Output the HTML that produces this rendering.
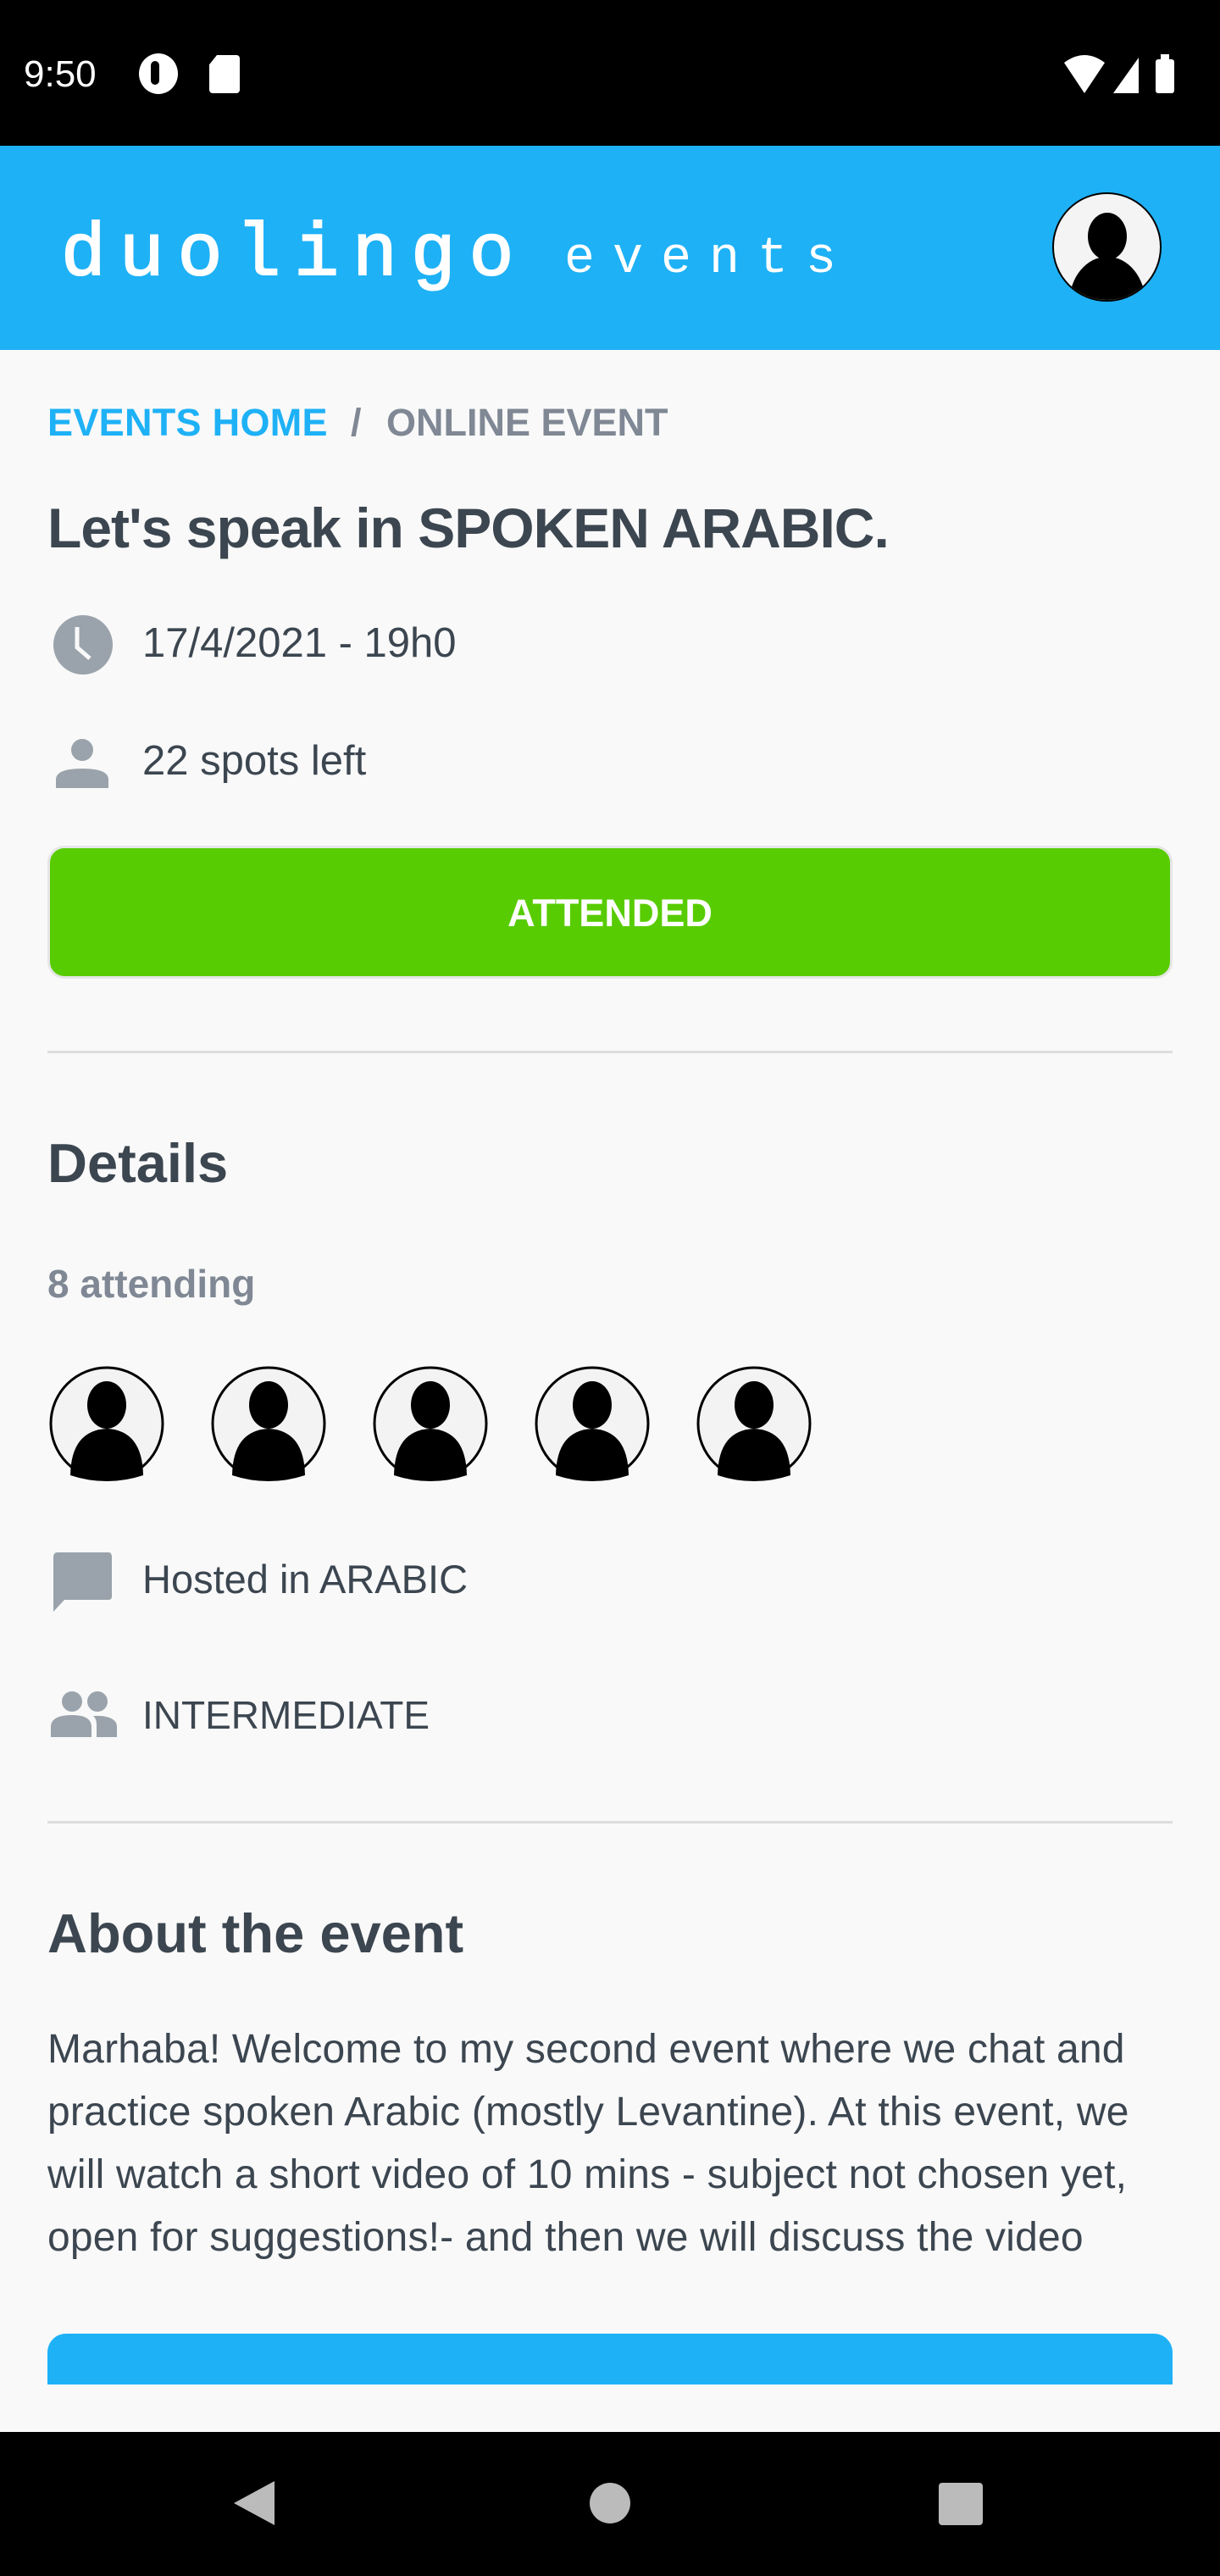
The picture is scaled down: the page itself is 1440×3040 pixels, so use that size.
<!DOCTYPE html>
<html><head><meta charset="utf-8"><style>
*{margin:0;padding:0;box-sizing:border-box}
body{width:1440px;height:3040px;background:#f9f9f9;font-family:"Liberation Sans",sans-serif;color:#3c4650;position:relative;overflow:hidden}
.a{position:absolute;white-space:nowrap}
.t{line-height:1}
</style></head><body>
<div class="a" style="left:0;top:0;width:1440px;height:172px;background:#000"></div>
<div class="a t" style="left:28px;top:66px;color:#fff;font-size:44px">9:50</div>
<div class="a" style="left:164px;top:63px;width:46px;height:48px;border-radius:50%;background:#fff"></div>
<div class="a" style="left:178px;top:72px;width:10px;height:28px;border-radius:5px;background:#000"></div>
<div class="a" style="left:247px;top:65px;width:36px;height:45px;background:#fff;border-radius:4px 4px 4px 4px;clip-path:polygon(25% 0,100% 0,100% 100%,0 100%,0 25%)"></div>
<svg class="a" style="left:1256px;top:64px" width="160" height="48"><path d="M0 10 Q24 -8 48 10 L24 46Z" fill="#fff"/><path d="M58 46 L88 4 L88 46Z" fill="#fff"/><rect x="108" y="6" width="22" height="40" rx="3" fill="#fff"/><rect x="114" y="0" width="10" height="8" fill="#fff"/></svg>

<div class="a" style="left:0;top:172px;width:1440px;height:241px;background:#1eb1f6"></div>
<div class="a t" style="left:72px;top:258px;color:#fff;font-size:88px;letter-spacing:16px;font-family:'Liberation Mono',monospace;-webkit-text-stroke:2px #fff">duolingo</div>
<div class="a t" style="left:666px;top:276px;color:#fff;font-size:60px;letter-spacing:21px;font-family:'Liberation Mono',monospace">events</div>
<div class="a" style="left:1242px;top:227px;width:129px;height:129px;border-radius:50%;background:#f4f4f4;border:2px solid #000;overflow:hidden">
<div style="position:absolute;left:40px;top:22px;width:46px;height:56px;border-radius:50%;background:#000"></div>
<div style="position:absolute;left:18px;top:74px;width:90px;height:110px;border-radius:50% 50% 0 0;background:#000"></div></div>

<div class="a t" style="left:56px;top:476px;font-size:45px;font-weight:bold;color:#1eb1f6;letter-spacing:0.3px">EVENTS HOME</div>
<div class="a t" style="left:414px;top:476px;font-size:45px;font-weight:bold;color:#7f8894">/</div>
<div class="a t" style="left:456px;top:476px;font-size:45px;font-weight:bold;color:#7f8894;letter-spacing:0px">ONLINE EVENT</div>
<div class="a t" style="left:56px;top:590px;font-size:66px;font-weight:bold;letter-spacing:-1px">Let's speak in SPOKEN ARABIC.</div>

<svg class="a" style="left:60px;top:723px" width="76" height="76"><circle cx="38" cy="38" r="35" fill="#9aa3ab"/><path d="M31 17 V41 L46 54" stroke="#f9f9f9" stroke-width="5" fill="none"/></svg>
<div class="a t" style="left:168px;top:735px;font-size:49px">17/4/2021 - 19h0</div>
<svg class="a" style="left:66px;top:872px" width="64" height="58"><circle cx="31" cy="13" r="13" fill="#9aa3ab"/><path d="M0 58 V48 Q0 35 31 35 Q62 35 62 48 V58Z" fill="#9aa3ab"/></svg>
<div class="a t" style="left:168px;top:874px;font-size:49px">22 spots left</div>

<div class="a" style="left:56px;top:998px;width:1328px;height:157px;border-radius:20px;background:#58cc02;border:3px solid #e6e6e6"></div>
<div class="a t" style="left:56px;top:1055px;width:1328px;text-align:center;color:#fff;font-weight:bold;font-size:45px">ATTENDED</div>

<div class="a" style="left:56px;top:1240px;width:1328px;height:3px;background:#ddd"></div>
<div class="a t" style="left:56px;top:1340px;font-size:65px;font-weight:bold">Details</div>
<div class="a t" style="left:56px;top:1492px;font-size:46px;font-weight:bold;color:#7f8894">8 attending</div>

<svg class="a" style="left:56px;top:1610px" width="960" height="140">
<defs><g id="p"><circle cx="0" cy="0" r="66" fill="#f3f3f3" stroke="#000" stroke-width="3"/><ellipse cx="0" cy="-22" rx="23" ry="28" fill="#000"/><path d="M-43 61 Q-42 8 0 6 Q42 8 43 61 Q22 68 0 68 Q-22 68 -43 61Z" fill="#000"/></g></defs>
<use href="#p" x="70" y="70"/><use href="#p" x="261" y="70"/><use href="#p" x="452" y="70"/><use href="#p" x="643" y="70"/><use href="#p" x="834" y="70"/></svg>

<svg class="a" style="left:62px;top:1832px" width="74" height="72"><path d="M6 0 H66 Q70 0 70 6 V52 Q70 56 66 56 H14 L1 70 V6 Q1 0 6 0Z" fill="#9aa3ab"/></svg>
<div class="a t" style="left:168px;top:1840px;font-size:47px">Hosted in ARABIC</div>
<svg class="a" style="left:58px;top:1994px" width="84" height="56"><circle cx="27" cy="14" r="12" fill="#9aa3ab"/><circle cx="57" cy="14" r="12" fill="#9aa3ab"/><path d="M2 56 V44 Q2 30 27 30 Q50 30 50 44 V56Z" fill="#9aa3ab"/><path d="M56 56 V42 Q56 34 52 31 Q80 30 80 44 V56Z" fill="#9aa3ab"/></svg>
<div class="a t" style="left:168px;top:2001px;font-size:46px">INTERMEDIATE</div>

<div class="a" style="left:56px;top:2149px;width:1328px;height:3px;background:#ddd"></div>
<div class="a t" style="left:56px;top:2249px;font-size:65px;font-weight:bold">About the event</div>
<div class="a" style="left:56px;top:2382px;font-size:48px;line-height:74px;white-space:normal;width:1380px;letter-spacing:0.2px">Marhaba! Welcome to my second event where we chat and<br>practice spoken Arabic (mostly Levantine). At this event, we<br>will watch a short video of 10 mins - subject not chosen yet,<br>open for suggestions!- and then we will discuss the video</div>

<div class="a" style="left:56px;top:2754px;width:1328px;height:80px;border-radius:22px 22px 0 0;background:#1eb1f6"></div>
<div class="a" style="left:0;top:2814px;width:1440px;height:56px;background:#f9f9f9"></div>
<div class="a" style="left:0;top:2870px;width:1440px;height:170px;background:#000"></div>
<svg class="a" style="left:270px;top:2924px" width="900" height="64"><path d="M6 30 L54 4 V56Z" fill="#bbb"/><circle cx="450" cy="30" r="24" fill="#bbb"/><rect x="838" y="6" width="52" height="50" rx="4" fill="#bbb"/></svg>
</body></html>
